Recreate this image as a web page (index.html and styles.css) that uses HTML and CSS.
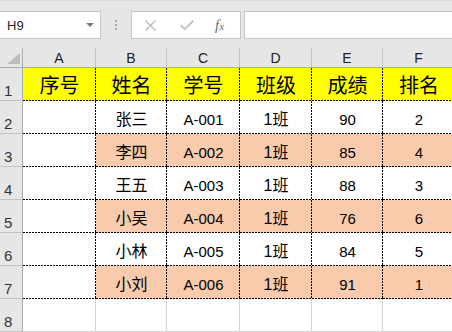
FILE: index.html
```html
<!DOCTYPE html>
<html lang="zh">
<head>
<meta charset="utf-8">
<title>Sheet</title>
<link rel="stylesheet" href="styles.css">
</head>
<body>
<div class="toolbar">
  <div class="namebox"><span class="ref">H9</span><span class="caret"></span></div>
  <div class="grip"><i></i><i></i><i></i></div>
  <div class="fbtns">
    <svg class="ico-x" width="11" height="11" viewBox="0 0 11 11"><path d="M0.5 0.5 L10.5 10.5 M10.5 0.5 L0.5 10.5" stroke="#bdbdbd" stroke-width="1.4" fill="none"/></svg>
    <svg class="ico-ok" width="14" height="11" viewBox="0 0 14 11"><path d="M0.8 5.2 L4.8 9.2 L13.2 0.8" stroke="#c4c4c4" stroke-width="2" fill="none"/></svg>
    <span class="fx">f<span class="fx-x">x</span></span>
  </div>
  <div class="finput"></div>
</div>
<div class="sheet">
  <div class="corner"><svg width="13" height="11" viewBox="0 0 13 11"><path d="M13 0 L13 11 L0 11 Z" fill="#bcbcbc"/></svg></div>
  <div class="ch">A</div><div class="ch">B</div><div class="ch">C</div><div class="ch">D</div><div class="ch">E</div><div class="ch">F</div>

  <div class="rh">1</div>
  <div class="c d y hd">序号</div><div class="c d y hd">姓名</div><div class="c d y hd">学号</div><div class="c d y hd">班级</div><div class="c d y hd">成绩</div><div class="c d y hd">排名</div>

  <div class="rh">2</div>
  <div class="c d"></div><div class="c d">张三</div><div class="c d num">A-001</div><div class="c d">1班</div><div class="c d num">90</div><div class="c d num">2</div>

  <div class="rh">3</div>
  <div class="c d"></div><div class="c d s">李四</div><div class="c d s num">A-002</div><div class="c d s">1班</div><div class="c d s num">85</div><div class="c d s num">4</div>

  <div class="rh">4</div>
  <div class="c d"></div><div class="c d">王五</div><div class="c d num">A-003</div><div class="c d">1班</div><div class="c d num">88</div><div class="c d num">3</div>

  <div class="rh">5</div>
  <div class="c d"></div><div class="c d s">小吴</div><div class="c d s num">A-004</div><div class="c d s">1班</div><div class="c d s num">76</div><div class="c d s num">6</div>

  <div class="rh">6</div>
  <div class="c d"></div><div class="c d">小林</div><div class="c d num">A-005</div><div class="c d">1班</div><div class="c d num">84</div><div class="c d num">5</div>

  <div class="rh">7</div>
  <div class="c d"></div><div class="c d s">小刘</div><div class="c d s num">A-006</div><div class="c d s">1班</div><div class="c d s num">91</div><div class="c d s num">1</div>

  <div class="rh">8</div>
  <div class="c g"></div><div class="c g"></div><div class="c g"></div><div class="c g"></div><div class="c g"></div><div class="c g"></div>
</div>
</body>
</html>
```
FILE: styles.css
```css
* { box-sizing: border-box; }
html, body { margin: 0; padding: 0; }
body {
  width: 452px;
  height: 332px;
  overflow: hidden;
  background: #e6e6e6;
  font-family: "Liberation Sans", "Noto Sans CJK SC", sans-serif;
  color: #000;
}
.toolbar {
  height: 48px;
  display: flex;
  align-items: flex-start;
  padding-top: 11px;
  border-top: 1px solid #d8d8d8;
  padding-top: 10px;
}
.namebox {
  width: 102px;
  height: 28px;
  margin-left: -1px;
  background: #fff;
  border: 1px solid #c6c6c6;
  display: flex;
  align-items: center;
  position: relative;
  padding-left: 7px;
}
.ref { font-size: 13px; color: #262626; }
.caret {
  position: absolute;
  left: 86px;
  top: 11px;
  width: 0; height: 0;
  border-left: 4px solid transparent;
  border-right: 4px solid transparent;
  border-top: 4px solid #7a7a7a;
}
.grip {
  width: 30px;
  height: 28px;
  display: flex;
  flex-direction: column;
  align-items: center;
  justify-content: center;
  gap: 2px;
}
.grip i { display: block; width: 2px; height: 2px; background: #a8a8a8; }
.fbtns {
  width: 110px;
  height: 28px;
  background: #fff;
  border: 1px solid #c6c6c6;
  display: flex;
  align-items: center;
  padding-left: 13px;
}
.ico-x { display: block; }
.ico-ok { display: block; margin-left: 24px; }
.fx {
  margin-left: 21px;
  font-family: "Liberation Serif", serif;
  font-style: italic;
  font-size: 15px;
  color: #6e6e6e;
  line-height: 1;
}
.fx-x { font-size: 11px; }
.finput {
  flex: 1;
  margin-left: 3px;
  margin-right: -2px;
  height: 28px;
  background: #fff;
  border: 1px solid #c6c6c6;
}
.sheet {
  display: grid;
  grid-template-columns: 23px 73px 71px 73px 72px 71px 72px;
  grid-template-rows: 20px;
  grid-auto-rows: 33px;
  width: 455px;
}
.corner {
  border-right: 1px solid #ababab;
  border-bottom: 1px solid #ababab;
  display: flex;
  align-items: flex-end;
  justify-content: flex-end;
  padding: 0 2px 3px 0;
}
.corner svg { display: block; }
.ch {
  border-right: 1px solid #c3c3c3;
  border-bottom: 1px solid #ababab;
  display: flex;
  justify-content: center;
  align-items: flex-end;
  font-size: 14px;
  line-height: 16px;
  padding-bottom: 1px;
  color: #222;
}
.rh {
  border-right: 1px solid #ababab;
  border-bottom: 1px solid #c3c3c3;
  display: flex;
  align-items: flex-end;
  padding-left: 4px;
  padding-bottom: 1px;
  font-size: 15px;
  line-height: 17px;
  color: #333;
}
.c {
  display: flex;
  justify-content: center;
  align-items: flex-end;
  background-color: #fff;
  font-size: 16px;
  line-height: 20px;
  padding-bottom: 4px;
}
.d {
  background-image:
    repeating-linear-gradient(to bottom, #000 0 2px, transparent 2px 3px),
    repeating-linear-gradient(to right, #000 0 2px, transparent 2px 3px);
  background-size: 1px 100%, 100% 1px;
  background-position: right top, left bottom;
  background-repeat: no-repeat;
}
.y { background-color: #ffff00; }
.s { background-color: #f8cbad; }
.hd { font-size: 20px; line-height: 24px; padding-bottom: 3px; }
.num { font-size: 15px; }
.g {
  border-right: 1px solid #d4d4d4;
  border-bottom: 1px solid #d4d4d4;
}
```
